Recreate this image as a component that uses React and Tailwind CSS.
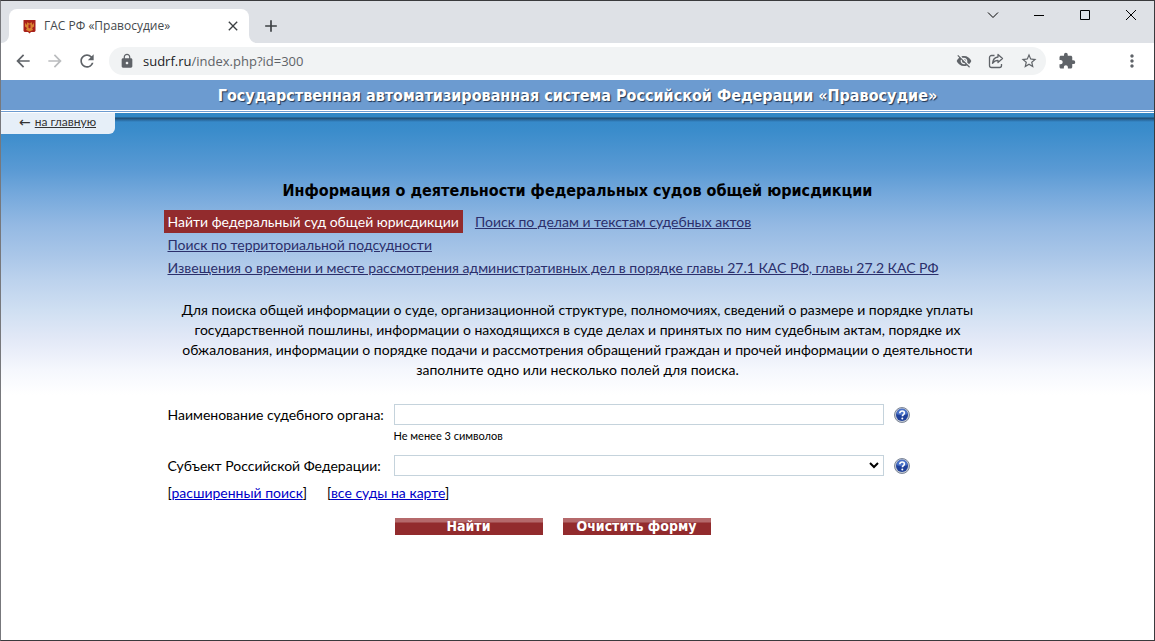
import { useState } from "react";
import {
  MdArrowBack,
  MdArrowForward,
  MdRefresh,
  MdLock,
  MdStarBorder,
  MdExtension,
  MdMoreVert,
  MdClose,
  MdAdd,
  MdVisibilityOff,
} from "react-icons/md";

const searchTabs = [
  "Найти федеральный суд общей юрисдикции",
  "Поиск по делам и текстам судебных актов",
  "Поиск по территориальной подсудности",
  "Извещения о времени и месте рассмотрения административных дел в порядке главы 27.1 КАС РФ, главы 27.2 КАС РФ",
];

const EmblemIcon = () => (
  <svg width="13" height="15" viewBox="0 0 13 15" aria-hidden="true">
    <path d="M.5 1h12v11l-1 1H8l-1.500 1.500L5 13H1.500l-1-1z" fill="#a8201a" />
    <path
      d="M2 3.500 3.500 6l1-3 1.500 1.500h1L8.500 3l1 3L11 3.500v4L9 9l1 2-3.500 1.500L3 11l1-2-2-1.500z"
      fill="#d9822f"
    />
    <path d="M5.500 5.500h2v3l-1 1-1-1z" fill="#a8201a" />
  </svg>
);

const ShareIcon = () => (
  <svg
    width="16"
    height="16"
    viewBox="0 0 16 16"
    fill="none"
    stroke="#5f6368"
    strokeWidth="1.300"
    strokeLinejoin="round"
    aria-hidden="true"
  >
    <path d="M6.500 2.500h-3a2 2 0 0 0-2 2v8a2 2 0 0 0 2 2h8a2 2 0 0 0 2-2V11" />
    <path d="M10 1.500 14.500 5.500 10 9.500V7.300C7.500 7.300 5.800 8.300 4.500 10.300 4.800 7 6.500 4.400 10 4z" />
  </svg>
);

const HelpIcon = () => (
  <svg width="16" height="16" viewBox="0 0 16 16" aria-hidden="true">
    <circle cx="8" cy="8" r="7.500" fill="#c3c9d4" stroke="#7d8798" />
    <circle cx="8" cy="8" r="6" fill="#20419a" />
    <path d="M2.500 7a5.500 5.500 0 0 1 11 0c-3 1.500-8 1.500-11 0z" fill="#4a72c8" />
    <path
      d="M5.800 6.200c0-1.400 1-2.200 2.300-2.200s2.300.8 2.300 2c0 1.600-2 1.700-2 3.200"
      fill="none"
      stroke="#fff"
      strokeWidth="1.600"
    />
    <circle cx="8.300" cy="11.400" r="1" fill="#fff" />
  </svg>
);

const BrowserBar = () => (
  <div className="font-['Open_Sans','Noto_Sans',sans-serif]">
    <div className="flex h-[42px] items-start justify-between bg-[#dee1e6]">
      <div className="flex items-center pt-2">
        <svg width="8" height="8" viewBox="0 0 8 8" className="self-end" aria-hidden="true">
          <path d="M8 0v8H0a8 8 0 0 0 8-8z" fill="#fff" />
        </svg>
        <div className="flex h-[34px] w-60 items-center rounded-t-lg bg-white pl-3.5 pr-2">
          <EmblemIcon />
          <span className="ml-2 flex-1 text-xs text-[#45494d]">
            ГАС РФ «Правосудие»
          </span>
          <button type="button" aria-label="Закрыть вкладку">
            <MdClose className="size-4 text-[#3c4043]" />
          </button>
        </div>
        <svg width="8" height="8" viewBox="0 0 8 8" className="self-end" aria-hidden="true">
          <path d="M0 0v8h8a8 8 0 0 1-8-8z" fill="#fff" />
        </svg>
        <button type="button" aria-label="Новая вкладка" className="ml-1">
          <MdAdd className="size-5 text-[#3c4043]" />
        </button>
      </div>
      <div className="flex h-7 items-center gap-[34px] pr-[17px] text-black">
        <button type="button" aria-label="Поиск вкладок">
          <svg width="12" height="12" viewBox="0 0 12 12" fill="none" stroke="currentColor">
            <path d="m1 3.500 5 5 5-5" />
          </svg>
        </button>
        <button type="button" aria-label="Свернуть">
          <svg width="12" height="12" viewBox="0 0 12 12" fill="none" stroke="currentColor">
            <path d="M1 6.500h10" />
          </svg>
        </button>
        <button type="button" aria-label="Развернуть">
          <svg width="12" height="12" viewBox="0 0 12 12" fill="none" stroke="currentColor">
            <path d="M1.500 1.500h9v9h-9z" />
          </svg>
        </button>
        <button type="button" aria-label="Закрыть">
          <svg width="12" height="12" viewBox="0 0 12 12" fill="none" stroke="currentColor">
            <path d="m1 1 10 10M11 1 1 11" />
          </svg>
        </button>
      </div>
    </div>
    <div className="flex h-[37px] items-center bg-white px-3 pb-px text-[#5f6368]">
      <div className="flex gap-3">
        <button type="button" aria-label="Назад">
          <MdArrowBack className="size-5" />
        </button>
        <button type="button" aria-label="Вперёд" className="text-[#babcbe]">
          <MdArrowForward className="size-5" />
        </button>
        <button type="button" aria-label="Обновить">
          <MdRefresh className="size-5" />
        </button>
      </div>
      <div className="ml-3 flex h-7 flex-1 items-center rounded-full bg-[#f1f3f4] pl-2.5 pr-2">
        <MdLock className="size-4" />
        <span className="ml-2 flex-1 text-[13px]">
          <span className="text-[#202124]">sudrf.ru</span>/index.php?id=300
        </span>
        <div className="flex items-center gap-4">
          <MdVisibilityOff className="size-4" />
          <ShareIcon />
          <MdStarBorder className="size-[18px]" />
        </div>
      </div>
      <MdExtension className="ml-3 size-[18px]" />
      <MdMoreVert className="ml-[46px] size-5" />
    </div>
  </div>
);

const HelpButton = ({ label }) => (
  <button type="button" aria-label={label} className="ml-2.5">
    <HelpIcon />
  </button>
);

const App = () => {
  const [activeTab, setActiveTab] = useState(0);
  const [courtName, setCourtName] = useState("");
  const [region, setRegion] = useState("");

  const resetForm = () => {
    setCourtName("");
    setRegion("");
  };

  return (
    <div className="flex min-h-screen flex-col border border-[#3a3a3d] border-l-[#77787c] bg-white font-['Lato','Open_Sans',sans-serif] text-sm text-black">
      <BrowserBar />
      <header className="border-b border-white bg-[#6c9bd0] pt-0.5">
        <h1 className="text-center font-['DejaVu_Sans_Condensed','Noto_Sans',sans-serif] text-base font-bold leading-7 text-white [text-shadow:1px_1px_1px_#1f3350]">
          Государственная автоматизированная система Российской Федерации
          «Правосудие»
        </h1>
      </header>
      <main className="flex-1 bg-[linear-gradient(#6c9bd0_0px,#6c9bd0_1px,#fff_1px,#fff_2px,#2f86c4_2px,#2f86c4_6px,#1d4a6e_7px,#2a6ba0_9px,#378aca_11px,#3a8ccb_19px,#5a9ad4_59px,#76a9dc_84px,#94b9e3_114px,#a9c6e8_144px,#bcd2ed_169px,#cfdff2_199px,#e3e9f7_229px,#f5f7fd_259px,#fff_284px)] pt-0.5">
        <nav className="flex h-[21px] w-[114px] items-center rounded-br-md bg-[#e6eff8] pb-1 pl-[18px] text-xs text-[#333]">
          <span className="mr-1 font-['DejaVu_Sans',sans-serif] text-sm leading-4">←</span>
          <a href="#main" className="underline">
            на главную
          </a>
        </nav>
        <div className="mx-auto max-w-[820px] pt-[45px]">
          <h2 className="text-center font-['DejaVu_Sans_Condensed','Noto_Sans',sans-serif] text-base font-bold leading-6">
            Информация о деятельности федеральных судов общей юрисдикции
          </h2>
          <div className="mt-[7px] flex flex-wrap gap-x-3">
            {searchTabs.map((tab, index) => (
              <a
                key={tab}
                href={`#tab${index}`}
                onClick={() => setActiveTab(index)}
                className={
                  index === activeTab
                    ? "-ml-1 bg-[#922b2d] px-1 leading-[23px] text-white"
                    : "leading-[23px] text-[#2b2f6b] underline"
                }
              >
                {tab}
              </a>
            ))}
          </div>
          <p className="mt-[21px] text-center leading-5">
            Для поиска общей информации о суде, организационной структуре,
            полномочиях, сведений о размере и порядке уплаты
            <br />
            государственной пошлины, информации о находящихся в суде делах и
            принятых по ним судебным актам, порядке их
            <br />
            обжалования, информации о порядке подачи и рассмотрения обращений
            граждан и прочей информации о деятельности
            <br />
            заполните одно или несколько полей для поиска.
          </p>
          <form className="mt-6" onSubmit={(e) => e.preventDefault()}>
            <div className="flex items-center">
              <label htmlFor="court" className="w-[226px]">
                Наименование судебного органа:
              </label>
              <input
                id="court"
                type="text"
                value={courtName}
                onChange={(e) => setCourtName(e.target.value)}
                className="h-[21px] w-[490px] border border-[#c5d3dc] bg-white px-1"
              />
              <HelpButton label="Справка о наименовании" />
            </div>
            <div className="ml-[226px] mt-[3px] text-[11px] leading-4">
              Не менее 3 символов
            </div>
            <div className="mt-[11px] flex items-center">
              <label htmlFor="region" className="w-[226px]">
                Субъект Российской Федерации:
              </label>
              <div className="relative">
                <select
                  id="region"
                  value={region}
                  onChange={(e) => setRegion(e.target.value)}
                  className="block h-[21px] w-[490px] appearance-none border border-[#c5d3dc] bg-white px-1"
                >
                  <option value=""></option>
                </select>
                <svg
                  className="pointer-events-none absolute right-1 top-1.5"
                  width="12"
                  height="8"
                  viewBox="0 0 12 8"
                  fill="none"
                  stroke="#000"
                  strokeWidth="2"
                >
                  <path d="m2 2 4 4 4-4" />
                </svg>
              </div>
              <HelpButton label="Справка о субъекте" />
            </div>
            <div className="mt-[7px] flex gap-5 leading-5">
              <span>
                [
                <a href="#extended" className="text-[#0000c8] underline">
                  расширенный поиск
                </a>
                ]
              </span>
              <span>
                [
                <a href="#map" className="text-[#0000c8] underline">
                  все суды на карте
                </a>
                ]
              </span>
            </div>
            <div className="ml-[227px] mt-[15px] flex gap-5 font-['DejaVu_Sans_Condensed','Noto_Sans',sans-serif] font-bold leading-[17px] text-white">
              <button
                type="submit"
                className="h-[17px] w-[148px] bg-[linear-gradient(#b5696b_4px,#922b2d_5px)]"
              >
                Найти
              </button>
              <button
                type="button"
                onClick={resetForm}
                className="h-[17px] w-[148px] bg-[linear-gradient(#b5696b_4px,#922b2d_5px)]"
              >
                Очистить форму
              </button>
            </div>
          </form>
        </div>
      </main>
    </div>
  );
};

export default App;
